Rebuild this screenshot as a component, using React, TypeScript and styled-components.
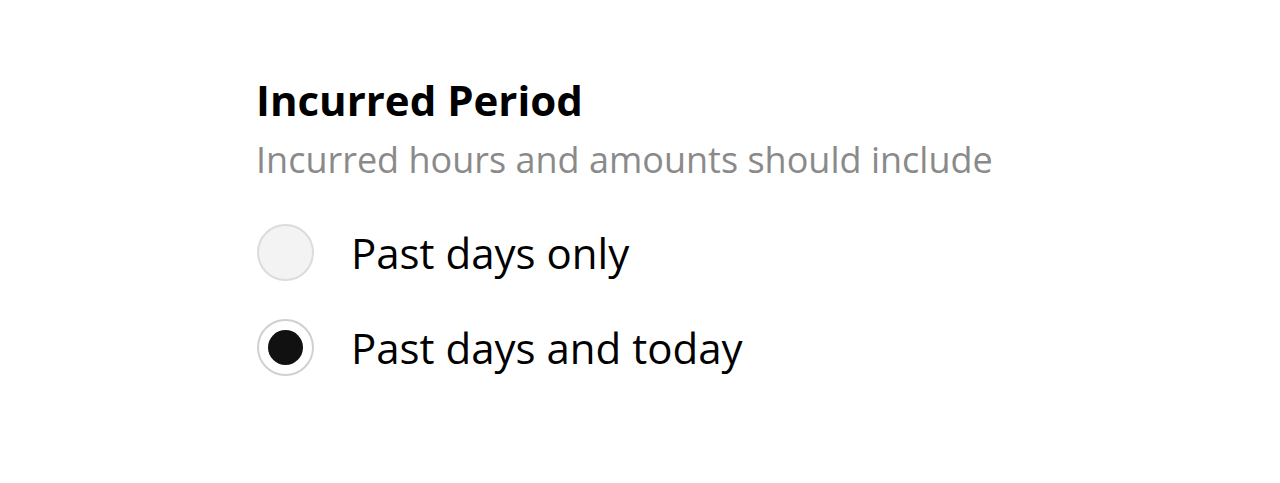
import React, { useState } from "react";
import styled, { createGlobalStyle } from "styled-components";

const Global = createGlobalStyle`
  html, body { margin: 0; padding: 0; background: #ffffff; }
  body { font-family: "Open Sans", "Noto Sans", sans-serif; -webkit-font-smoothing: antialiased; }
`;

const Page = styled.div`
  width: 1280px;
  height: 483px;
  box-sizing: border-box;
  padding: 76px 0 0 256px;
  background: #ffffff;
`;

const Section = styled.section`
  display: flex;
  flex-direction: column;
`;

const Title = styled.h2`
  margin: 0;
  font-size: 42px;
  line-height: 48px;
  font-weight: 700;
  color: #000000;
`;

const Subtitle = styled.p`
  margin: 14px 0 0;
  font-size: 36px;
  line-height: 44px;
  font-weight: 400;
  color: #8a8a8a;
`;

const Options = styled.div`
  display: flex;
  flex-direction: column;
  gap: 38px;
  margin-top: 42px;
`;

const Option = styled.label`
  display: flex;
  align-items: center;
  gap: 37px;
  cursor: pointer;
`;

const Radio = styled.span<{ $checked: boolean }>`
  box-sizing: border-box;
  width: 57px;
  height: 57px;
  border-radius: 50%;
  border: 2px solid ${(p) => (p.$checked ? "#d0d0d0" : "#dcdcdc")};
  background: ${(p) => (p.$checked ? "#ffffff" : "#f3f3f3")};
  display: flex;
  align-items: center;
  justify-content: center;
  flex-shrink: 0;
  margin-left: 1px;
  &::after {
    content: "";
    display: ${(p) => (p.$checked ? "block" : "none")};
    width: 35px;
    height: 35px;
    border-radius: 50%;
    background: #111111;
  }
`;

const OptionText = styled.span`
  font-size: 42px;
  line-height: 56px;
  color: #000000;
`;

export default function App() {
  const [value, setValue] = useState("today");
  const opts = [
    { id: "past", label: "Past days only" },
    { id: "today", label: "Past days and today" },
  ];
  return (
    <Page>
      <Global />
      <Section>
        <Title>Incurred Period</Title>
        <Subtitle>Incurred hours and amounts should include</Subtitle>
        <Options>
          {opts.map((o) => (
            <Option key={o.id} onClick={() => setValue(o.id)}>
              <Radio $checked={value === o.id} />
              <OptionText>{o.label}</OptionText>
            </Option>
          ))}
        </Options>
      </Section>
    </Page>
  );
}
